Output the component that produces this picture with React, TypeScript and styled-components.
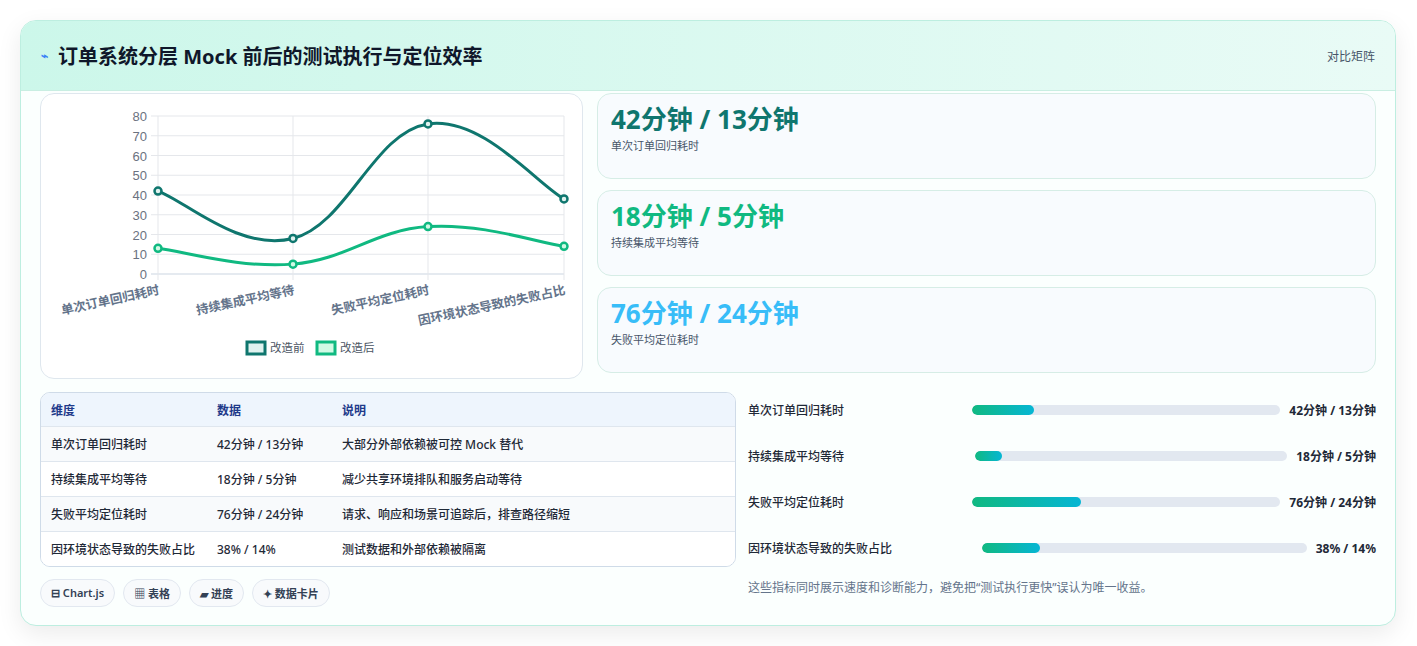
import React from "react";
import styled, { createGlobalStyle } from "styled-components";

const G = createGlobalStyle`
  body{margin:0;background:#fff;font-family:"Noto Sans","Noto Sans CJK SC",sans-serif;}
`;
const Page = styled.div`padding:20px 21px 20px 20px;`;
const Card = styled.div`
  border:1px solid #bdeee0;border-radius:16px;overflow:hidden;background:#fbfffe;
  box-shadow:0 8px 24px rgba(0,0,0,0.08);height:606px;box-sizing:border-box;
`;
const Header = styled.div`
  height:69px;display:flex;align-items:center;justify-content:space-between;padding:0 20px;
  background:linear-gradient(90deg,#ccf7ea,#e9fbf6);border-bottom:1px solid #c9eee2;
`;
const Title = styled.h1`margin:0;font-size:20px;font-weight:700;color:#0f172a;display:flex;align-items:center;gap:10px;`;
const Tag = styled.span`font-size:12px;color:#475569;`;
const Body = styled.div`padding:2px 19px 0 19px;`;
const Top = styled.div`display:grid;grid-template-columns:543px 1fr;gap:14px;`;
const Panel = styled.div`border:1px solid #dfe7ee;border-radius:14px;background:#fff;height:284px;`;
const Kpis = styled.div`display:flex;flex-direction:column;gap:11px;`;
const Kpi = styled.div`border:1px solid #d6ede6;border-radius:14px;background:#f8fbfe;height:86px;box-sizing:border-box;padding:8px 13px;`;
const KVal = styled.div<{c:string}>`font-size:26px;font-weight:700;color:${p=>p.c};line-height:34px;`;
const KLab = styled.div`font-size:11px;color:#475569;margin-top:1px;`;
const Bottom = styled.div`display:grid;grid-template-columns:696px 1fr;gap:12px;margin-top:13px;`;
const Table = styled.div`border:1px solid #cfdbe8;border-radius:10px;overflow:hidden;background:#fff;`;
const Row = styled.div<{head?:boolean;alt?:boolean}>`
  display:grid;grid-template-columns:166px 125px 1fr;height:${p=>p.head?33:34}px;align-items:center;padding:0 10px;
  font-size:12px;color:${p=>p.head?"#1e3a8a":"#1f2937"};font-weight:${p=>p.head?600:500};
  background:${p=>p.head?"#eef5fd":p.alt?"#f8fafc":"#fff"};border-top:${p=>p.head?"none":"1px solid #dfe6ee"};
`;
const Chips = styled.div`display:flex;gap:8px;margin-top:12px;`;
const Chip = styled.span`font-size:11px;font-weight:600;color:#334155;border:1px solid #e2e8f0;background:#f8fafc;border-radius:14px;padding:5px 10px;`;
const Bars = styled.div`display:flex;flex-direction:column;margin-top:-5px;`;
const BarRow = styled.div`display:flex;align-items:center;height:46px;font-size:12px;color:#1f2937;font-weight:500;`;
const BLab = styled.div<{w:number}>`width:${p=>p.w}px;`;
const Track = styled.div`flex:1;height:10px;background:#e2e8f0;border-radius:5px;overflow:hidden;margin-right:9px;`;
const Fill = styled.div`height:100%;border-radius:5px;background:linear-gradient(90deg,#10b981,#06b6d4);`;
const BVal = styled.div`font-weight:700;color:#1f2937;`;
const Note = styled.div`font-size:12px;color:#64748b;margin-top:7px;`;

const xs=[117,252,387,523];
const yOf=(v:number)=>180-v*158/80;
function path(vals:number[]){
  const pts=vals.map((v,i)=>[xs[i],yOf(v)]);
  let d=`M${pts[0][0]},${pts[0][1]}`;
  for(let i=0;i<pts.length-1;i++){
    const p0=pts[i-1]||pts[i],p1=pts[i],p2=pts[i+1],p3=pts[i+2]||p2;
    const t=0.2;
    const c1=[p1[0]+(p2[0]-p0[0])*t,p1[1]+(p2[1]-p0[1])*t];
    const c2=[p2[0]-(p3[0]-p1[0])*t,p2[1]-(p3[1]-p1[1])*t];
    d+=` C${c1[0]},${c1[1]} ${c2[0]},${c2[1]} ${p2[0]},${p2[1]}`;
  }
  return d;
}
const before=[42,18,76,38], after=[13,5,24,14];
const cats=["单次订单回归耗时","持续集成平均等待","失败平均定位耗时","因环境状态导致的失败占比"];

function Chart(){
  return <svg width="543" height="284" style={{display:"block"}}>
    {[0,10,20,30,40,50,60,70,80].map(v=><g key={v}>
      <line x1={110} x2={523} y1={yOf(v)} y2={yOf(v)} stroke={v===0?"#cbd5e1":"#e5e7eb"}/>
      <text x={106} y={yOf(v)+5} fontSize="13" fill="#6b7280" textAnchor="end" fontFamily="Liberation Sans">{v}</text>
    </g>)}
    {xs.map(x=><line key={x} x1={x} x2={x} y1={yOf(80)} y2={186} stroke="#e5e7eb"/>)}
    <path d={path(before)} fill="none" stroke="#0f766e" strokeWidth="3"/>
    <path d={path(after)} fill="none" stroke="#10b981" strokeWidth="3"/>
    {before.map((v,i)=><circle key={i} cx={xs[i]} cy={yOf(v)} r="3.5" fill="#e0f2ef" stroke="#0f766e" strokeWidth="2.5"/>)}
    {after.map((v,i)=><circle key={i} cx={xs[i]} cy={yOf(v)} r="3.5" fill="#d1fae5" stroke="#10b981" strokeWidth="2.5"/>)}
    {cats.map((c,i)=><text key={c} transform={`translate(${xs[i]+2},${200}) rotate(-12)`} fontSize="12.5" fontWeight="600" fill="#64748b" textAnchor="end">{c}</text>)}
    <rect x={206} y={248} width={18} height={12} fill="#e0f2ef" stroke="#0f766e" strokeWidth="3"/>
    <text x={229} y={258} fontSize="11.5" fill="#4b5563">改造前</text>
    <rect x={276} y={248} width={18} height={12} fill="#d1fae5" stroke="#10b981" strokeWidth="3"/>
    <text x={299} y={258} fontSize="11.5" fill="#4b5563">改造后</text>
  </svg>;
}

const rows=[
  ["单次订单回归耗时","42分钟 / 13分钟","大部分外部依赖被可控 Mock 替代"],
  ["持续集成平均等待","18分钟 / 5分钟","减少共享环境排队和服务启动等待"],
  ["失败平均定位耗时","76分钟 / 24分钟","请求、响应和场景可追踪后，排查路径缩短"],
  ["因环境状态导致的失败占比","38% / 14%","测试数据和外部依赖被隔离"],
];
const bars=[[224,20],[227,8.6],[224,35.5],[234,18]];

export default function App(){
  return <Page><G/><Card>
    <Header><Title><span style={{color:"#3b82f6",fontSize:12}}>⌁</span>订单系统分层 Mock 前后的测试执行与定位效率</Title><Tag>对比矩阵</Tag></Header>
    <Body>
      <Top>
        <Panel><Chart/></Panel>
        <Kpis>
          <Kpi><KVal c="#0f766e">42分钟 / 13分钟</KVal><KLab>单次订单回归耗时</KLab></Kpi>
          <Kpi><KVal c="#10b981">18分钟 / 5分钟</KVal><KLab>持续集成平均等待</KLab></Kpi>
          <Kpi><KVal c="#38bdf8">76分钟 / 24分钟</KVal><KLab>失败平均定位耗时</KLab></Kpi>
        </Kpis>
      </Top>
      <Bottom>
        <div>
          <Table>
            <Row head><span>维度</span><span>数据</span><span>说明</span></Row>
            {rows.map((r,i)=><Row key={i} alt={i%2===0}><span>{r[0]}</span><span>{r[1]}</span><span>{r[2]}</span></Row>)}
          </Table>
          <Chips><Chip>⊟ Chart.js</Chip><Chip>▦ 表格</Chip><Chip>▰ 进度</Chip><Chip>✦ 数据卡片</Chip></Chips>
        </div>
        <Bars>
          {bars.map((b,i)=><BarRow key={i}><BLab w={b[0]}>{cats[i]}</BLab><Track><Fill style={{width:b[1]+"%"}}/></Track><BVal>{rows[i][1]}</BVal></BarRow>)}
          <Note>这些指标同时展示速度和诊断能力，避免把“测试执行更快”误认为唯一收益。</Note>
        </Bars>
      </Bottom>
    </Body>
  </Card></Page>;
}
